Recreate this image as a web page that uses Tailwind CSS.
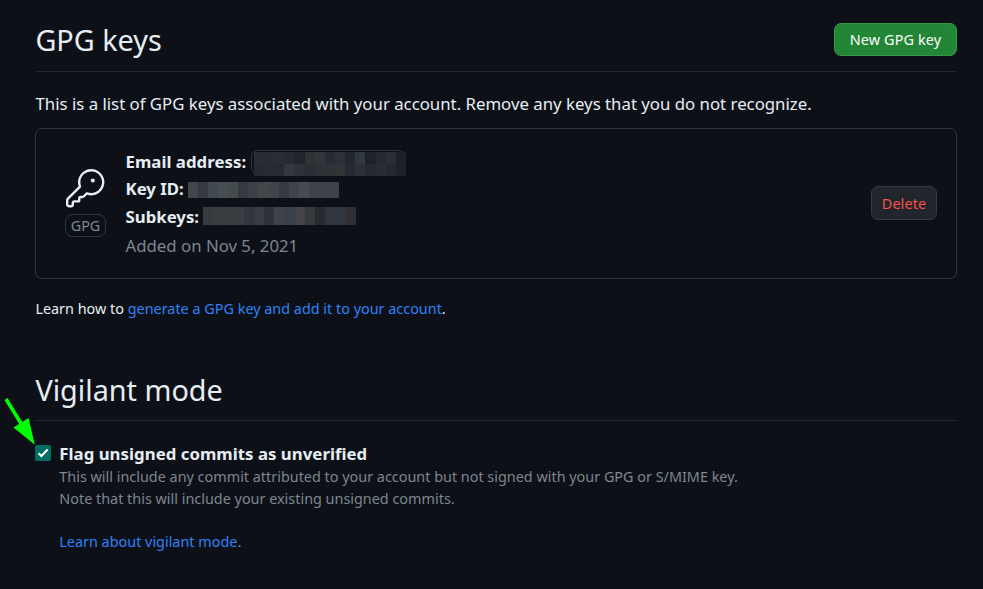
<!DOCTYPE html>
<html lang="en">
<head>
<meta charset="utf-8">
<title>GPG keys</title>
<script src="https://cdn.jsdelivr.net/npm/@tailwindcss/browser@4"></script>
</head>
<body class="bg-[#0d1117] text-[#e6edf3] font-['Noto_Sans',sans-serif] text-[16.8px] leading-[25.2px] h-[589px] overflow-hidden">
<main class="pl-[35px] pr-[26px] pt-[19px]">
  <header class="flex justify-between border-b border-[#21262d] h-[53px]">
    <h1 class="pl-[0.4px] text-[28.8px] leading-[41px]">GPG keys</h1>
    <button class="mt-1 h-[33px] w-[123px] pt-[2px] rounded-[7px] border border-[#379648] bg-[#238636] text-white text-[14.4px] leading-none tracking-[0.12px]">New GPG key</button>
  </header>
  <p class="mt-[19px] pl-[0.5px] whitespace-nowrap">This is a list of GPG keys associated with your account. Remove any keys that you do not recognize.</p>
  <section class="mt-[12px] h-[151px] rounded-[7px] border border-[#30363d] flex items-start pr-[19px]">
    <div class="ml-[29px] mt-[40px] w-[41px] flex flex-col items-center">
      <svg class="w-[38.4px] h-[38.4px]" viewBox="0 0 24 24" fill="currentColor"><path d="M16.75 8.5a1.25 1.25 0 100-2.5 1.25 1.25 0 000 2.5z"/><path fill-rule="evenodd" d="M15.75 0a8.25 8.25 0 00-7.851 10.79L.513 18.178A1.75 1.75 0 000 19.414v2.836C0 23.217.784 24 1.75 24h1.5A1.75 1.75 0 005 22.25v-1a.25.25 0 01.25-.25h2.735a.75.75 0 00.545-.22l.214-.213A.875.875 0 009 19.948V18.5a.25.25 0 01.25-.25h1.086c.464 0 .91-.184 1.237-.513l1.636-1.636A8.25 8.25 0 1015.75 0zM9 8.25a6.75 6.75 0 114.288 6.287.75.75 0 00-.804.168l-1.971 1.972a.25.25 0 01-.177.073H9.25A1.75 1.75 0 007.5 18.5v1H5.25a1.75 1.75 0 00-1.75 1.75v1a.25.25 0 01-.25.25h-1.5a.25.25 0 01-.25-.25v-2.836a.25.25 0 01.073-.177l7.722-7.721a.75.75 0 00.168-.804A6.73 6.73 0 019 8.25z"/></svg>
      <span class="mt-[6.6px] h-[23px] w-[41px] rounded-[8px] border border-[#30363d] text-[#7d8590] text-[14.4px] leading-[22px] text-center">GPG</span>
    </div>
    <div class="ml-[19.5px] mt-[19px] flex-1">
      <div class="flex h-[28px]"><strong class="w-[125.5px] leading-[28px] tracking-[0.03px] whitespace-nowrap">Email address:</strong>
        <svg class="mt-[2px] w-[156px] h-[28px]" viewBox="0 0 156 28" shape-rendering="crispEdges">
          <path d="M3.5 23.5Q.5 21 .5 17V7Q.5 .5 7 .5H145Q150 .5 152 2" fill="none" stroke="#30363d" shape-rendering="auto"/>
          <g id="email"></g>
        </svg></div>
      <div class="flex h-[27px]"><strong class="w-[62.5px] leading-[25px] whitespace-nowrap">Key ID:</strong>
        <svg class="mt-[6px] w-[152px] h-[16px]" viewBox="0 0 152 16" shape-rendering="crispEdges"><g id="keyid"></g></svg></div>
      <div class="flex h-[28px]"><strong class="w-[77.5px] leading-[28px] whitespace-nowrap">Subkeys:</strong>
        <svg class="mt-[4px] w-[154px] h-[18px]" viewBox="0 0 154 18" shape-rendering="crispEdges"><g id="subkeys"></g></svg></div>
      <div class="text-[#7d8590] leading-[30px] h-[29px]">Added on Nov 5, 2021</div>
    </div>
    <button class="mt-[57px] h-[34px] w-[66px] pt-[2px] rounded-[7px] border border-[#363b42] bg-[#21262d] text-[#f85149] text-[14.4px] leading-none tracking-[0.12px]">Delete</button>
  </section>
  <p class="mt-[18px] pl-[0.4px] text-[14.4px] leading-[24px]">Learn how to <a class="text-[#2f81f7]">generate a GPG key and add it to your account</a>.</p>
  <div class="mt-[48px] h-[52px] border-b border-[#21262d]"><h2 class="pl-[0.4px] text-[28.8px] leading-[41px]">Vigilant mode</h2></div>
  <div class="flex mt-[21px]">
    <svg class="mt-[3px] mr-[8.3px] w-4 h-4 shrink-0" viewBox="0 0 16 16"><rect width="16" height="16" rx="2" fill="#006d64"/><path d="M3.5 8.2L6.4 11L12.7 4.5" fill="none" stroke="white" stroke-width="2.2"/></svg>
    <div>
      <strong class="block leading-[24px] tracking-[0.03px]">Flag unsigned commits as unverified</strong>
      <p class="text-[14.4px] leading-[21.6px] text-[#7d8590] whitespace-nowrap">This will include any commit attributed to your account but not signed with your GPG or S/MIME key.<br>Note that this will include your existing unsigned commits.</p>
      <p class="mt-[21.6px] text-[14.4px] leading-[21.6px] text-[#7d8590]"><a class="text-[#2f81f7]">Learn about vigilant mode</a>.</p>
    </div>
  </div>
</main>
<svg class="absolute left-0 top-[394px] w-[40px] h-[52px]" viewBox="0 0 40 52"><path d="M6 5L22 31" stroke="#00ff00" stroke-width="3.6"/><path d="M13.5 33.5L28.5 24L34.8 50.8Z" fill="#00ff00"/></svg>
<script>
  // Redaction mosaic: rows of [id, x, y, row height, cell width, cell colours]
  const rows = [
    ['email', 3, 2, 12, 10.13, '282c34 282c34 2a2d33 272a2e 20242d 2e3235 32363d 282b34 2d3138 23262f 2f3740 1f2226 25292f 2a2e36 1d2125'],
    ['email', 3, 14, 12, 10.13, '242830 282b31 272a32 34373d 2e3237 292d34 2d3135 2d3235 303435 262932 2b3038 24282f 282c34 23272f 1d2129'],
    ['keyid', 0, 0, 16, 10.07, '43464d 363a42 404850 454e55 454a4b 363941 3c4047 444649 40444c 353942 40434b 484a4d 3f424a 3f424a 3f424a'],
    ['subkeys', 0, 0, 18, 10.2, '373a41 393c40 3a3e40 3a3d42 31353e 383b44 2e323b 3f424a 39424a 424548 35393d 262a30 30353f 30363f 2e2f32']
  ];
  for (const [id, x, y, h, w, colours] of rows) {
    colours.split(' ').forEach((c, i) => {
      const r = document.createElementNS('http://www.w3.org/2000/svg', 'rect');
      const a = Math.round(i * w), b = Math.round((i + 1) * w);
      r.setAttribute('x', x + a); r.setAttribute('y', y);
      r.setAttribute('width', b - a); r.setAttribute('height', h);
      r.setAttribute('fill', '#' + c);
      document.getElementById(id).appendChild(r);
    });
  }
</script>
</body>
</html>
